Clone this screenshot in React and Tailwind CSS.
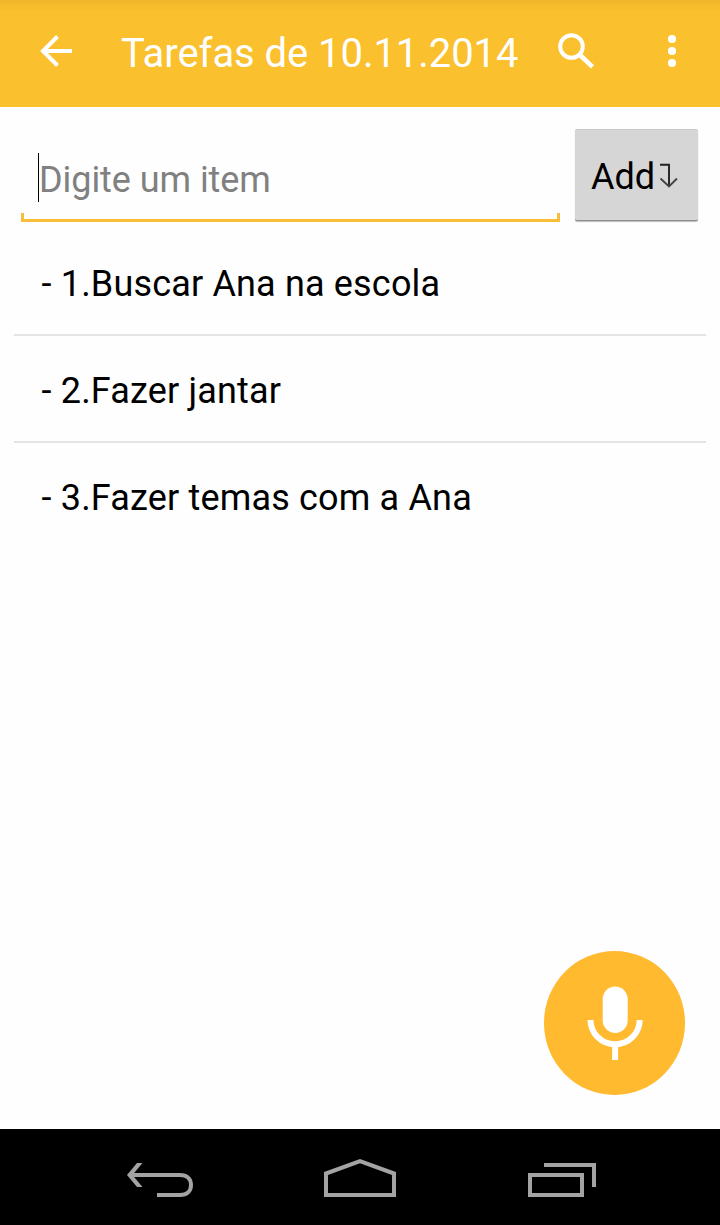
const TASKS = ['1.Buscar Ana na escola', '2.Fazer jantar', '3.Fazer temas com a Ana'];

function Header() {
  return (
    <header className="flex h-[107px] shrink-0 items-start bg-[#fac02d] bg-linear-to-b from-[#f2b52a] to-[#fac02d] to-[11px] text-white">
      <button aria-label="Voltar" className="ml-9 mt-[27px]">
        <svg className="block size-12" viewBox="0 0 48 48" fill="none" stroke="currentColor" strokeWidth="4">
          <path d="M36 24H7M21.500 9.500 7 24l14.500 14.500" />
        </svg>
      </button>
      <h1 className="ml-[37px] mt-[27px] w-[410px] whitespace-nowrap text-[40px] leading-[54px] tracking-[-0.06px]">
        Tarefas de 10.11.2014
      </h1>
      <button aria-label="Pesquisar" className="ml-[21px] mt-[27px]">
        <svg className="block size-12" viewBox="0 0 48 48" fill="none" stroke="currentColor">
          <circle cx="19.500" cy="19.500" r="11.300" strokeWidth="4" />
          <path d="m27.500 27.500 13 12.300" strokeWidth="4.600" />
        </svg>
      </button>
      <button aria-label="Mais" className="ml-[48px] mt-[27px]">
        <svg className="block size-12" viewBox="0 0 48 48" fill="currentColor">
          <circle cx="24" cy="12" r="4.100" />
          <circle cx="24" cy="24" r="4.100" />
          <circle cx="24" cy="36" r="4.100" />
        </svg>
      </button>
    </header>
  );
}

function Composer() {
  return (
    <div className="flex h-[122px] shrink-0 items-start pl-[21px] pt-[22px]">
      <div className="w-[539px]">
        <div className="flex h-[84px] items-start pl-[17px] pt-6">
          <span className="h-[49px] w-px bg-black" />
          <input
            placeholder="Digite um item"
            className="h-[54px] w-[500px] bg-transparent text-[36px] leading-[54px] tracking-[-0.06px] outline-none placeholder:text-[#808080]"
          />
        </div>
        <div className="h-[9px] border-x-[3px] border-b-[3px] border-[#f9bd38]" />
      </div>
      <button className="ml-[15px] flex h-[92px] w-[123px] items-start rounded-[2px] border-b border-b-[#8f8f8f] border-t border-t-[#c8c8c8] bg-[#d6d6d6] pl-[16px] pt-[24px] text-black shadow-[0_1px_1px_#bbbbbb]">
        <span className="text-[36px] leading-[46px]">Add</span>
        <svg className="ml-[3px] mt-[9px] h-[28px] w-[20px]" viewBox="0 0 20 28" fill="none" stroke="#222222" strokeWidth="1.900">
          <path d="M2 1.800h9V23" />
          <path d="m2.500 15.500 8.500 8 8-8" stroke="#444444" />
        </svg>
      </button>
    </div>
  );
}

function TaskList() {
  return (
    <ul className="mx-[14px] flex flex-col divide-y-2 divide-[#e4e4e4]">
      {TASKS.map((task) => (
        <li key={task} className="h-[107px] pl-[27.500px] pt-[30.500px] text-[36px] leading-[48px] tracking-[0.17px] text-black">
          - {task}
        </li>
      ))}
    </ul>
  );
}

function NavBar() {
  return (
    <nav className="flex h-24 shrink-0 gap-20 bg-black pl-[100px] text-[#a3a3a3]">
      <button aria-label="Anterior">
        <svg className="block h-24 w-[120px]" viewBox="0 0 120 96" fill="none" stroke="currentColor" strokeWidth="4">
          <path d="M31 46H80C87 46 91 50 91 56S87 66 80 66H57" />
          <path d="M37 34h5.500L32.500 46l10 12H37L27 46Z" fill="currentColor" stroke="none" />
        </svg>
      </button>
      <button aria-label="Início">
        <svg className="block h-24 w-[120px]" viewBox="0 0 120 96" fill="none" stroke="currentColor" strokeWidth="4">
          <path d="M26 66V44.500L60 32.200l34 12.300V66Z" />
        </svg>
      </button>
      <button aria-label="Recentes">
        <svg className="block h-24 w-[120px]" viewBox="0 0 120 96" fill="none" stroke="currentColor" strokeWidth="4">
          <path d="M30 46h52v20H30ZM44 36h50v22" />
        </svg>
      </button>
    </nav>
  );
}

export default function App() {
  return (
    <div className="relative flex h-[1225px] w-[720px] flex-col overflow-hidden bg-[#fefefe] font-['Roboto',sans-serif]">
      <Header />
      <main className="flex flex-1 flex-col">
        <Composer />
        <TaskList />
      </main>
      <button aria-label="Falar" className="absolute left-[543.500px] top-[951px] h-[143.500px] w-[141px] rounded-[50%] bg-[#ffba30] text-white">
        <svg className="block h-[143.500px] w-[141px]" viewBox="0 0 141 143.500" fill="none" stroke="currentColor" strokeWidth="6">
          <rect x="58.700" y="35.500" width="25" height="46.500" rx="12.500" fill="currentColor" stroke="none" />
          <path d="M46.500 69a24.600 24.300 0 0 0 49.200 0M71.100 93v16" />
        </svg>
      </button>
      <NavBar />
    </div>
  );
}
